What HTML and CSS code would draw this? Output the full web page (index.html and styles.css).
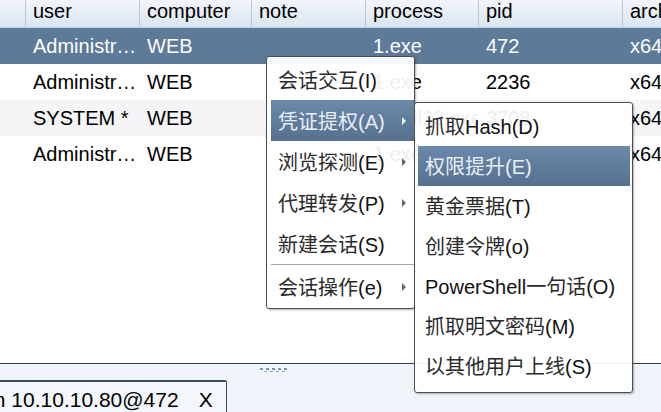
FILE: index.html
```html
<!DOCTYPE html>
<html lang="zh-CN">

<head>
    <meta charset="UTF-8">
    <title>Sessions</title>
    <link rel="stylesheet" href="styles.css">
</head>

<body>
    <div class="app">
        <div class="grid">
            <div class="row head">
                <div class="cell c-id"></div>
                <div class="cell c-user">user</div>
                <div class="cell c-computer">computer</div>
                <div class="cell c-note">note</div>
                <div class="cell c-process">process</div>
                <div class="cell c-pid">pid</div>
                <div class="cell c-arch">arch</div>
            </div>
            <div class="row selected">
                <div class="cell c-id"></div>
                <div class="cell c-user">Administr…</div>
                <div class="cell c-computer">WEB</div>
                <div class="cell c-note"></div>
                <div class="cell c-process">1.exe</div>
                <div class="cell c-pid">472</div>
                <div class="cell c-arch">x64</div>
            </div>
            <div class="row">
                <div class="cell c-id"></div>
                <div class="cell c-user">Administr…</div>
                <div class="cell c-computer">WEB</div>
                <div class="cell c-note"></div>
                <div class="cell c-process">1.exe</div>
                <div class="cell c-pid">2236</div>
                <div class="cell c-arch">x64</div>
            </div>
            <div class="row alt">
                <div class="cell c-id"></div>
                <div class="cell c-user">SYSTEM *</div>
                <div class="cell c-computer">WEB</div>
                <div class="cell c-note"></div>
                <div class="cell c-process">rundll32.exe</div>
                <div class="cell c-pid">3708</div>
                <div class="cell c-arch">x64</div>
            </div>
            <div class="row">
                <div class="cell c-id"></div>
                <div class="cell c-user">Administr…</div>
                <div class="cell c-computer">WEB</div>
                <div class="cell c-note"></div>
                <div class="cell c-process">1.exe</div>
                <div class="cell c-pid">3124</div>
                <div class="cell c-arch">x64</div>
            </div>
        </div>

        <div class="console">
            <div class="grip">
                <svg width="28" height="5" viewBox="0 0 28 5">
                    <g fill="#7d92ae">
                        <rect x="0" y="0" width="3" height="2" />
                        <rect x="6" y="0" width="3" height="2" />
                        <rect x="12" y="0" width="3" height="2" />
                        <rect x="18" y="0" width="3" height="2" />
                        <rect x="24" y="0" width="3" height="2" />
                    </g>
                    <g fill="#8fa6c4">
                        <rect x="4" y="3" width="3" height="1" />
                        <rect x="10" y="3" width="3" height="1" />
                        <rect x="16" y="3" width="3" height="1" />
                        <rect x="22" y="3" width="3" height="1" />
                    </g>
                </svg>
            </div>
            <div class="tabs">
                <div class="tab">Admin 10.10.10.80@472<span class="close">X</span></div>
            </div>
        </div>

        <!-- right-click menu on the selected session -->
        <div class="menu main-menu">
            <div class="item"><span class="zh">会话交互</span>(I)</div>
            <div class="item active has-sub"><span class="zh">凭证提权</span>(A)</div>
            <div class="item has-sub"><span class="zh">浏览探测</span>(E)</div>
            <div class="item has-sub"><span class="zh">代理转发</span>(P)</div>
            <div class="item"><span class="zh">新建会话</span>(S)</div>
            <div class="sep"></div>
            <div class="item has-sub"><span class="zh">会话操作</span>(e)</div>
        </div>

        <div class="menu sub-menu">
            <div class="item"><span class="zh">抓取</span>Hash(D)</div>
            <div class="item active"><span class="zh">权限提升</span>(E)</div>
            <div class="item"><span class="zh">黄金票据</span>(T)</div>
            <div class="item"><span class="zh">创建令牌</span>(o)</div>
            <div class="item">PowerShell<span class="zh">一句话</span>(O)</div>
            <div class="item"><span class="zh">抓取明文密码</span>(M)</div>
            <div class="item"><span class="zh">以其他用户上线</span>(S)</div>
        </div>
    </div>
</body>

</html>
```

FILE: styles.css
```css
html,
body {
    margin: 0;
    padding: 0;
    overflow: hidden;
}

body {
    font-family: "Liberation Sans", Arial, "Noto Sans CJK SC", sans-serif;
    font-size: 20px;
    color: #000;
    background-color: #fff;
}

.app {
    position: relative;
    width: 661px;
    height: 412px;
    overflow: hidden;
}

/* session table */
.grid {
    height: 363px;
    background-color: #fff;
}

.row {
    display: flex;
    height: 36px;
    line-height: 36px;
    white-space: nowrap;
}

.row.alt {
    background-color: #f5f5f8;
}

.row.selected {
    background-color: #5e7a99;
    color: #fff;
}

.cell {
    box-sizing: border-box;
    padding-left: 8px;
    overflow: hidden;
    flex-shrink: 0;
}

.c-id { width: 25px; padding-left: 0; }
.c-user { width: 114px; }
.c-computer { width: 112px; }
.c-note { width: 114px; }
.c-process { width: 113px; }
.c-pid { width: 144px; }
.c-arch { flex: 1; }

.row.head {
    height: 28px;
    line-height: 22px;
    background: linear-gradient(#f1f5fb, #dbe5f1);
    border-bottom: 1px solid #c3d1e2;
    box-sizing: border-box;
}

.row.head .cell {
    border-left: 1px solid #b6c7dc;
    padding-left: 7px;
}

.row.head .c-id {
    border-left: none;
}

/* bottom console with tabs */
.console {
    height: 49px;
    box-sizing: border-box;
    border-top: 1px solid #3d3d3d;
    background-color: #eff3fa;
    position: relative;
}

.grip {
    height: 16px;
    padding-left: 260px;
    padding-top: 4px;
    box-sizing: border-box;
}

.grip svg {
    display: block;
}

.tabs {
    display: flex;
}

.tab {
    margin-left: -62px;
    padding: 0 13px 0 8px;
    height: 40px;
    line-height: 36px;
    font-size: 21px;
    border-top: 2px solid #3b4b61;
    border-right: 1px solid #3b4b61;
    border-top-right-radius: 2px;
    background-color: #f3f6fc;
    white-space: nowrap;
}

.close {
    margin-left: 20px;
}

/* popup menus */
.menu {
    position: absolute;
    box-sizing: border-box;
    background-color: rgba(255, 255, 255, 0.93);
    border: 1px solid #4e4e4e;
    border-radius: 3px;
    box-shadow: 1px 1px 2px rgba(0, 0, 0, 0.3);
    white-space: nowrap;
}

.main-menu {
    left: 266px;
    top: 56px;
    width: 149px;
    padding: 2px 0 1px 4px;
}

.main-menu .item {
    height: 41px;
    line-height: 41px;
}

.sub-menu {
    left: 414px;
    top: 102px;
    width: 219px;
    padding: 3px 2px 6px 3px;
}

.sub-menu .item {
    height: 40px;
    line-height: 40px;
}

.item {
    position: relative;
    padding-left: 7px;
    color: #111;
}

.item .zh {
    font-family: "Noto Sans CJK SC", sans-serif;
    color: #2a2a2a;
}

.item.active {
    background: linear-gradient(#6b89aa, #56708e);
    color: #e9eef5;
}

.item.active .zh {
    color: #e9eef5;
}

.has-sub::after {
    content: '';
    position: absolute;
    right: 8px;
    top: 50%;
    margin-top: -4px;
    border-left: 4px solid #666;
    border-top: 4px solid transparent;
    border-bottom: 4px solid transparent;
}

.item.active.has-sub::after {
    border-left-color: #f2f5f9;
}

.sep {
    height: 2px;
    border-top: 1px solid #a9a9a9;
    border-bottom: 1px solid #fff;
    box-sizing: border-box;
}
```
